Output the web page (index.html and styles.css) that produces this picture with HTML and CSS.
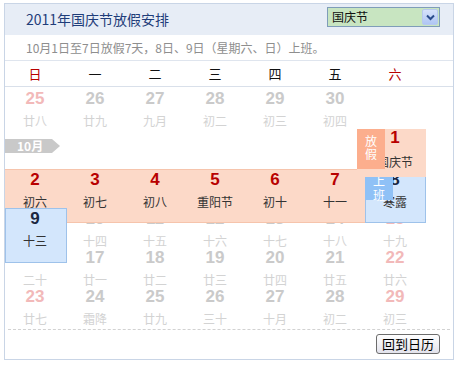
FILE: index.html
```html
<!DOCTYPE html>
<html lang="zh">
<head>
<meta charset="utf-8">
<title>2011年国庆节放假安排</title>
<link rel="stylesheet" href="styles.css">
</head>
<body>
<div class="cal">
  <div class="hd">
    <span class="title">2011年国庆节放假安排</span>
    <div class="sel">
      <span class="sel-text">国庆节</span>
      <span class="sel-btn"><svg width="9" height="7" viewBox="0 0 9 7"><path d="M1 1.5 L4.5 5 L8 1.5" fill="none" stroke="#2a4c8c" stroke-width="2"/></svg></span>
    </div>
  </div>
  <div class="note">10月1日至7日放假7天，8日、9日（星期六、日）上班。</div>
  <div class="week">
    <span class="red">日</span><span>一</span><span>二</span><span>三</span><span>四</span><span>五</span><span class="red">六</span>
  </div>
  <div class="body">
    <div class="row r1">
      <div class="cell dim we"><b>25</b><span>廿八</span></div>
      <div class="cell dim"><b>26</b><span>廿九</span></div>
      <div class="cell dim"><b>27</b><span>九月</span></div>
      <div class="cell dim"><b>28</b><span>初二</span></div>
      <div class="cell dim"><b>29</b><span>初三</span></div>
      <div class="cell dim"><b>30</b><span>初四</span></div>
      <div class="cell"></div>
    </div>
    <div class="row rm">
      <div class="mtag">10月</div>
      <div class="cell oct1"><i class="tag off">放<br>假</i><b>1</b><span>国庆节</span></div>
    </div>
    <div class="row">
      <div class="cell hol"><b>2</b><span>初六</span></div>
      <div class="cell hol"><b>3</b><span>初七</span></div>
      <div class="cell hol"><b>4</b><span>初八</span></div>
      <div class="cell hol"><b>5</b><span>重阳节</span></div>
      <div class="cell hol"><b>6</b><span>初十</span></div>
      <div class="cell hol"><b>7</b><span>十一</span></div>
      <div class="cell work w8"><i class="tag on">上<br>班</i><b>8</b><span>寒露</span></div>
    </div>
    <div class="row">
      <div class="cell work w9"><b>9</b><span>十三</span></div>
      <div class="cell dim"><b>10</b><span>十四</span></div>
      <div class="cell dim"><b>11</b><span>十五</span></div>
      <div class="cell dim"><b>12</b><span>十六</span></div>
      <div class="cell dim"><b>13</b><span>十七</span></div>
      <div class="cell dim"><b>14</b><span>十八</span></div>
      <div class="cell dim we"><b>15</b><span>十九</span></div>
    </div>
    <div class="row">
      <div class="cell dim we"><b>16</b><span>二十</span></div>
      <div class="cell dim"><b>17</b><span>廿一</span></div>
      <div class="cell dim"><b>18</b><span>廿二</span></div>
      <div class="cell dim"><b>19</b><span>廿三</span></div>
      <div class="cell dim"><b>20</b><span>廿四</span></div>
      <div class="cell dim"><b>21</b><span>廿五</span></div>
      <div class="cell dim we"><b>22</b><span>廿六</span></div>
    </div>
    <div class="row">
      <div class="cell dim we"><b>23</b><span>廿七</span></div>
      <div class="cell dim"><b>24</b><span>霜降</span></div>
      <div class="cell dim"><b>25</b><span>廿九</span></div>
      <div class="cell dim"><b>26</b><span>三十</span></div>
      <div class="cell dim"><b>27</b><span>十月</span></div>
      <div class="cell dim"><b>28</b><span>初二</span></div>
      <div class="cell dim we"><b>29</b><span>初三</span></div>
    </div>
  </div>
  <div class="ft"><button class="back" type="button">回到日历</button></div>
</div>
</body>
</html>
```

FILE: styles.css
```css
* { box-sizing: border-box; }
html, body { margin: 0; padding: 0; background: #fff; }
body {
  font-family: "Noto Sans CJK SC", "Noto Sans", sans-serif;
  color: #222;
}
.cal {
  margin: 3px 0 0 4px;
  width: 450px;
  height: 357px;
  border: 1px solid #c9d5e6;
}
.hd {
  height: 31px;
  background: #e7edf6;
  display: flex;
  justify-content: space-between;
  align-items: flex-start;
  padding: 0 13px 0 21px;
}
.title {
  font-size: 14px;
  line-height: 31px;
  color: #1f3d7a;
}
.sel {
  margin-top: 3px;
  width: 113px;
  height: 20px;
  border: 1px solid #7f9db9;
  background: #c8e5c1;
  display: flex;
  align-items: center;
  justify-content: space-between;
  padding: 0 1px 0 4px;
}
.sel-text { font-size: 12px; line-height: 18px; color: #111; }
.sel-btn {
  width: 16px;
  height: 16px;
  background: linear-gradient(#d6e2fb, #afc6f4);
  border: 1px solid #b7c9ee;
  border-radius: 2px;
  display: flex;
  align-items: center;
  justify-content: center;
}
.note {
  height: 26px;
  border-bottom: 1px solid #dfe5ee;
  padding-left: 21px;
  font-size: 12px;
  line-height: 25px;
  color: #8e8e8e;
}
.week {
  height: 26px;
  border-bottom: 1px solid #d9e0ea;
  display: grid;
  grid-template-columns: repeat(7, 60px);
  font-size: 13px;
  line-height: 25px;
  text-align: center;
  color: #111;
}
.week .red { color: #b80000; }
.row {
  display: grid;
  grid-template-columns: repeat(7, 60px);
  height: 39px;
}
.r1 { height: 42px; }
.rm { height: 40px; }
.cell {
  text-align: center;
  position: relative;
}
.cell b {
  display: block;
  font-family: "Liberation Sans", Arial, sans-serif;
  font-weight: bold;
  font-size: 17px;
  line-height: 20px;
  padding-top: 1px;
  color: #b80000;
}
.cell span {
  display: block;
  font-size: 12px;
  line-height: 24px;
  color: #333;
  white-space: nowrap;
}
.dim b { color: #cacaca; }
.dim span { color: #d3d3d3; }
.dim.we b { color: #f2b9b9; }
.r1 .cell b { padding-top: 2px; }
.mtag {
  grid-column: 1;
  align-self: start;
  margin-top: 10px;
  width: 55px;
  height: 14px;
  background: #c9c9c9;
  clip-path: polygon(0 0, 47px 0, 55px 7px, 47px 14px, 0 14px);
  color: #fff;
  font-weight: bold;
  font-size: 12px;
  line-height: 14px;
  padding-left: 12px;
}
.oct1 {
  grid-column: 7;
  z-index: 2;
}
.oct1::before {
  content: "";
  position: absolute;
  top: 0; bottom: 0; left: -8px; right: -1px;
  background: #fcd9c8;
  z-index: -1;
}
.oct1 b { padding-top: 0; line-height: 18px; }
.oct1 span { line-height: 30px; }
.hol { z-index: 1; }
.hol::before {
  content: "";
  position: absolute;
  top: 0; bottom: -9px; left: 0; right: 0;
  background: #fcd9c8;
  border-top: 1px solid #f6c4ac;
  border-bottom: 1px solid #f6c4ac;
  z-index: -1;
}
.work { z-index: 1; }
.work b { color: #1b2740; }
.work span { color: #333; }
.work::before {
  content: "";
  position: absolute;
  top: 0; left: 0;
  background: #d3e6fc;
  border: 1px solid #9ec2ea;
  z-index: -1;
}
.w8::before { right: -1px; bottom: -9px; }
.w9::before { right: -2px; bottom: -10px; }
.tag {
  position: absolute;
  top: 0;
  width: 28px;
  font-style: normal;
  color: #fff;
  font-size: 12px;
  line-height: 13px;
  z-index: 2;
  display: flex;
  align-items: center;
  justify-content: center;
  text-align: center;
}
.tag.off {
  left: -8px;
  height: 40px;
  background: #fcae8d;
  padding-bottom: 4px;
}
.tag.on {
  left: 0;
  height: 31px;
  background: #8fc1f6;
  padding-top: 6px;
  line-height: 14px;
}
.ft {
  margin: 4px 3px 0 3px;
  border-top: 1px dashed #d2d2d2;
  display: flex;
  justify-content: flex-end;
  padding: 4px 10px 0 0;
}
.back {
  width: 64px;
  height: 20px;
  border: 1px solid #6c6c6c;
  border-radius: 3px;
  background: linear-gradient(#ffffff, #e3e3ec);
  font-family: "Noto Sans CJK SC", sans-serif;
  font-size: 13px;
  line-height: 16px;
  padding: 0;
  color: #000;
}
```
